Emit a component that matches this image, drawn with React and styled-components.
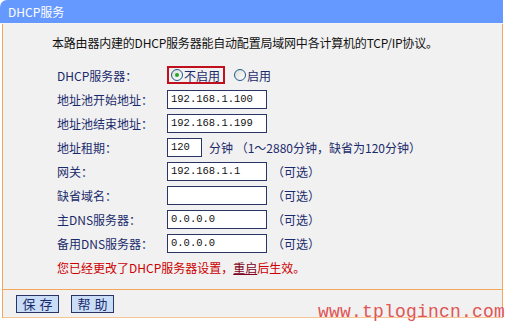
import React from 'react'
import styled, { createGlobalStyle } from 'styled-components'

const GlobalStyle = createGlobalStyle`
  body {
    margin: 0;
    background: #ffffff;
    font-family: "Noto Sans CJK SC", "DejaVu Sans", sans-serif;
    font-size: 12px;
  }
`

const Panel = styled.div`
  position: relative;
  width: 503px;
  height: 321px;
`

const Header = styled.div`
  height: 24px;
  line-height: 24px;
  padding-left: 8px;
  background: #6699ff;
  border-top-left-radius: 7px;
  color: #ffffff;
  font-size: 12px;
  border-bottom: 1px solid #f4f4f4;
  box-sizing: border-box;
`

const Body = styled.div`
  margin-left: 2px;
  width: 501px;
  box-sizing: border-box;
  background: #f1f1f1;
  border-left: 1px solid #f3a75c;
  border-right: 1px solid #f3a75c;
`

const Content = styled.div`
  padding: 9px 0 9px 49px;
`

const Intro = styled.div`
  height: 20px;
  line-height: 20px;
  color: #111111;
  letter-spacing: -0.2px;
`

const Form = styled.div`
  margin-top: 10px;
  padding-left: 5px;
`

const Row = styled.div`
  display: grid;
  grid-template-columns: 110px auto;
  align-items: center;
  height: 24px;
  color: #1b2a6b;
`

const Label = styled.span`
  color: #1b2a6b;
`

const Field = styled.div`
  display: flex;
  align-items: center;
  gap: ${p => p.gap || 5}px;
`

const Input = styled.div`
  width: ${p => p.w || 100}px;
  height: 19px;
  box-sizing: border-box;
  background: #ffffff;
  border: 1px solid #2a3566;
  padding-left: 3px;
  line-height: 17px;
  font-family: "Liberation Mono", "DejaVu Sans Mono", monospace;
  font-size: 10.5px;
  color: #111111;
`

const Hint = styled.span`
  color: #1b2a6b;
  white-space: nowrap;
`

const RadioBox = styled.div`
  display: flex;
  align-items: center;
  gap: 1px;
  height: 18px;
  box-sizing: border-box;
  padding: 0 3px 0 2px;
  border: ${p => (p.framed ? '2px solid #c0101e' : '2px solid transparent')};
  color: #1b2a6b;
`

const Radio = styled.span`
  position: relative;
  width: 12px;
  height: 12px;
  box-sizing: border-box;
  border-radius: 50%;
  border: 1px solid #1c5a8a;
  background: linear-gradient(135deg, #dcdcd6, #ffffff);
  &::after {
    content: '';
    display: ${p => (p.checked ? 'block' : 'none')};
    position: absolute;
    left: 3px;
    top: 3px;
    width: 4px;
    height: 4px;
    border-radius: 50%;
    background: #27a327;
  }
`

const Notice = styled.div`
  height: 24px;
  line-height: 24px;
  margin-top: 1px;
  color: #cc0000;
`

const Link = styled.span`
  text-decoration: underline;
  color: #800020;
`

const ButtonBar = styled.div`
  display: flex;
  gap: 12px;
  height: 29px;
  padding: 5px 0 0 13px;
  box-sizing: border-box;
  border-top: 1px solid #f3a75c;
  border-bottom: 1px solid #f7c593;
`

const Button = styled.button`
  width: 43px;
  height: 18px;
  padding: 0;
  border: 1px solid #2a3566;
  background: #c9ddf7;
  color: #1b2a6b;
  font-family: "Noto Sans CJK SC", sans-serif;
  font-size: 13px;
  line-height: 16px;
  letter-spacing: 4px;
  text-indent: 4px;
`

const Watermark = styled.div`
  position: absolute;
  right: -2px;
  bottom: -1px;
  font-family: "Liberation Mono", "Courier New", monospace;
  font-size: 18px;
  line-height: 20px;
  color: #e05555;
  letter-spacing: 0.2px;
`

const rows = [
  { label: '地址池开始地址：', value: '192.168.1.100' },
  { label: '地址池结束地址：', value: '192.168.1.199' },
  { label: '地址租期：', value: '120', w: 35, gap: 7, hint: '分钟 （1～2880分钟，缺省为120分钟）' },
  { label: '网关：', value: '192.168.1.1', hint: '（可选）' },
  { label: '缺省域名：', value: '', hint: '（可选）' },
  { label: '主DNS服务器：', value: '0.0.0.0', hint: '（可选）' },
  { label: '备用DNS服务器：', value: '0.0.0.0', hint: '（可选）' },
]

export default function App () {
  return (
    <Panel>
      <GlobalStyle />
      <Header>DHCP服务</Header>
      <Body>
        <Content>
          <Intro>本路由器内建的DHCP服务器能自动配置局域网中各计算机的TCP/IP协议。</Intro>
          <Form>
            <Row>
              <Label>DHCP服务器：</Label>
              <Field gap={5}>
                <RadioBox framed>
                  <Radio checked />
                  <span>不启用</span>
                </RadioBox>
                <RadioBox>
                  <Radio />
                  <span>启用</span>
                </RadioBox>
              </Field>
            </Row>
            {
              rows.map((row, index) => (
                <Row key={index}>
                  <Label>{row.label}</Label>
                  <Field gap={row.gap}>
                    <Input w={row.w}>{row.value}</Input>
                    {row.hint && <Hint>{row.hint}</Hint>}
                  </Field>
                </Row>
              ))
            }
            <Notice>您已经更改了DHCP服务器设置，<Link>重启</Link>后生效。</Notice>
          </Form>
        </Content>
        <ButtonBar>
          <Button>保存</Button>
          <Button>帮助</Button>
        </ButtonBar>
      </Body>
      <Watermark>www.tplogincn.com</Watermark>
    </Panel>
  )
}
